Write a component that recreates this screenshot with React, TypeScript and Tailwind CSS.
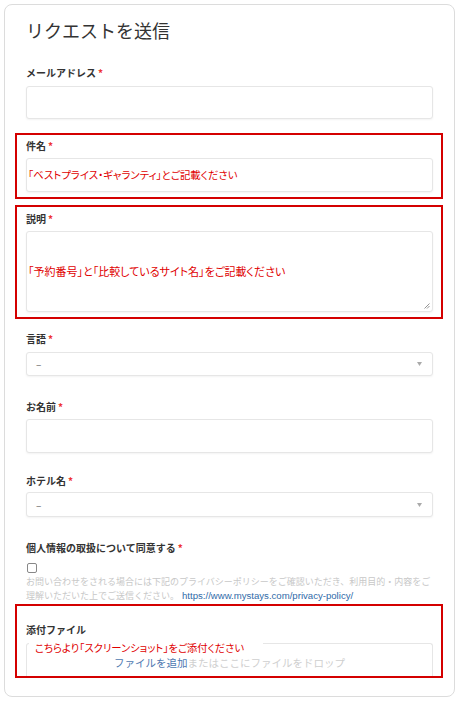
import React from "react";

function Label({ text, req = true }: { text: string; req?: boolean }) {
  return (
    <div className="h-[14px] leading-[14px] text-[10px] font-bold text-[#333]">
      {text}
      {req && <span className="ml-[2px] text-[#e33]">*</span>}
    </div>
  );
}

function Select({ cls }: { cls: string }) {
  return (
    <div
      className={`${cls} flex items-center justify-between rounded-[3px] border border-[#e6e6e6] bg-white pl-[9px] pr-[10px] shadow-[0_1px_2px_rgba(0,0,0,0.05)]`}
    >
      <span className="text-[10px] leading-none text-[#666]">–</span>
      <svg width="5" height="4" viewBox="0 0 5 4">
        <path d="M0 0 L5 0 L2.5 4 Z" fill="#aaa" />
      </svg>
    </div>
  );
}

export default function App() {
  return (
    <div className="min-h-[704px] bg-white pl-[4px] pt-[4px] font-['Noto_Sans_CJK_JP',sans-serif]">
      <div className="h-[693px] w-[451px] rounded-[8px] border border-[#dcdcdc] bg-white px-[21px] pt-[12px]">
        <div className="h-[26px] text-[18px] leading-[26px] text-[#333]">リクエストを送信</div>

        <div className="mt-[23px]">
          <Label text="メールアドレス" />
        </div>
        <div className="mt-[6px] h-[33px] rounded-[3px] border border-[#e6e6e6] bg-white shadow-[0_1px_2px_rgba(0,0,0,0.05)]" />

        <div className="-ml-[11px] -mr-[10px] mt-[14px] border-2 border-[#d40000] pb-[5px] pl-[9px] pr-[8px] pt-[4px]">
          <Label text="件名" />
          <div className="mt-[5px] flex h-[34px] items-center rounded-[3px] border border-[#e6e6e6] bg-white pl-[1px] shadow-[0_1px_2px_rgba(0,0,0,0.05)]">
            <span className="text-[10.4px] leading-none text-[#e00000] [font-feature-settings:'palt']">
              「ベストプライス・ギャランティ」とご記載ください
            </span>
          </div>
        </div>

        <div className="-ml-[11px] -mr-[10px] mt-[6px] border-2 border-[#d40000] pb-[5px] pl-[9px] pr-[8px] pt-[5px]">
          <Label text="説明" />
          <div className="relative mt-[5px] flex h-[81px] items-center rounded-[3px] border border-[#e6e6e6] bg-white pl-[1px] shadow-[0_1px_2px_rgba(0,0,0,0.05)]">
            <span className="text-[11px] leading-none text-[#e00000] [font-feature-settings:'palt']">
              「予約番号」と「比較しているサイト名」をご記載ください
            </span>
            <svg className="absolute bottom-[2px] right-[2px]" width="6" height="6" viewBox="0 0 6 6">
              <path d="M0.5 5.5 L5.5 0.5 M3 5.5 L5.5 3" stroke="#888" strokeWidth="0.9" />
            </svg>
          </div>
        </div>

        <div className="mt-[13px]">
          <Label text="言語" />
        </div>
        <Select cls="mt-[6px] h-[24px]" />

        <div className="mt-[24px]">
          <Label text="お名前" />
        </div>
        <div className="mt-[5px] h-[34px] rounded-[3px] border border-[#e6e6e6] bg-white shadow-[0_1px_2px_rgba(0,0,0,0.05)]" />

        <div className="mt-[21px]">
          <Label text="ホテル名" />
        </div>
        <Select cls="mt-[4px] h-[25px]" />

        <div className="mt-[24px]">
          <Label text="個人情報の取扱について同意する" />
        </div>
        <div className="ml-[1px] mt-[8px] h-[10px] w-[10px] rounded-[2px] border border-[#888] bg-white" />
        <div className="mt-[2px] whitespace-nowrap text-[9px] leading-[14px] text-[#c8c8c8]">
          <div>お問い合わせをされる場合には下記のプライバシーポリシーをご確認いただき、利用目的・内容をご</div>
          <div>
            理解いただいた上でご送信ください。
            <span className="ml-[3px] font-['Liberation_Sans',sans-serif] text-[9.6px] text-[#2f6aa8]">
              https://www.mystays.com/privacy-policy/
            </span>
          </div>
        </div>

        <div className="-ml-[11px] -mr-[10px] mt-[1px] border-2 border-[#d40000] pb-0 pl-[9px] pr-[8px] pt-[17px]">
          <Label text="添付ファイル" req={false} />
          <div className="relative mt-[6px] flex h-[33px] items-start justify-center rounded-t-[3px] border border-b-0 border-[#e6e6e6] bg-white pt-[13px]">
            <span className="text-[10.5px] leading-[11px]">
              <span className="text-[#4d78b0]">ファイルを追加</span>
              <span className="text-[#cfcfcf]">またはここにファイルをドロップ</span>
            </span>
            <span className="absolute -top-[2px] left-[2px] bg-white pl-[6px] pr-[19px] text-[10.3px] leading-[12px] text-[#e00000] [font-feature-settings:'palt']">
              こちらより「スクリーンショット」をご添付ください
            </span>
          </div>
        </div>
      </div>
    </div>
  );
}
